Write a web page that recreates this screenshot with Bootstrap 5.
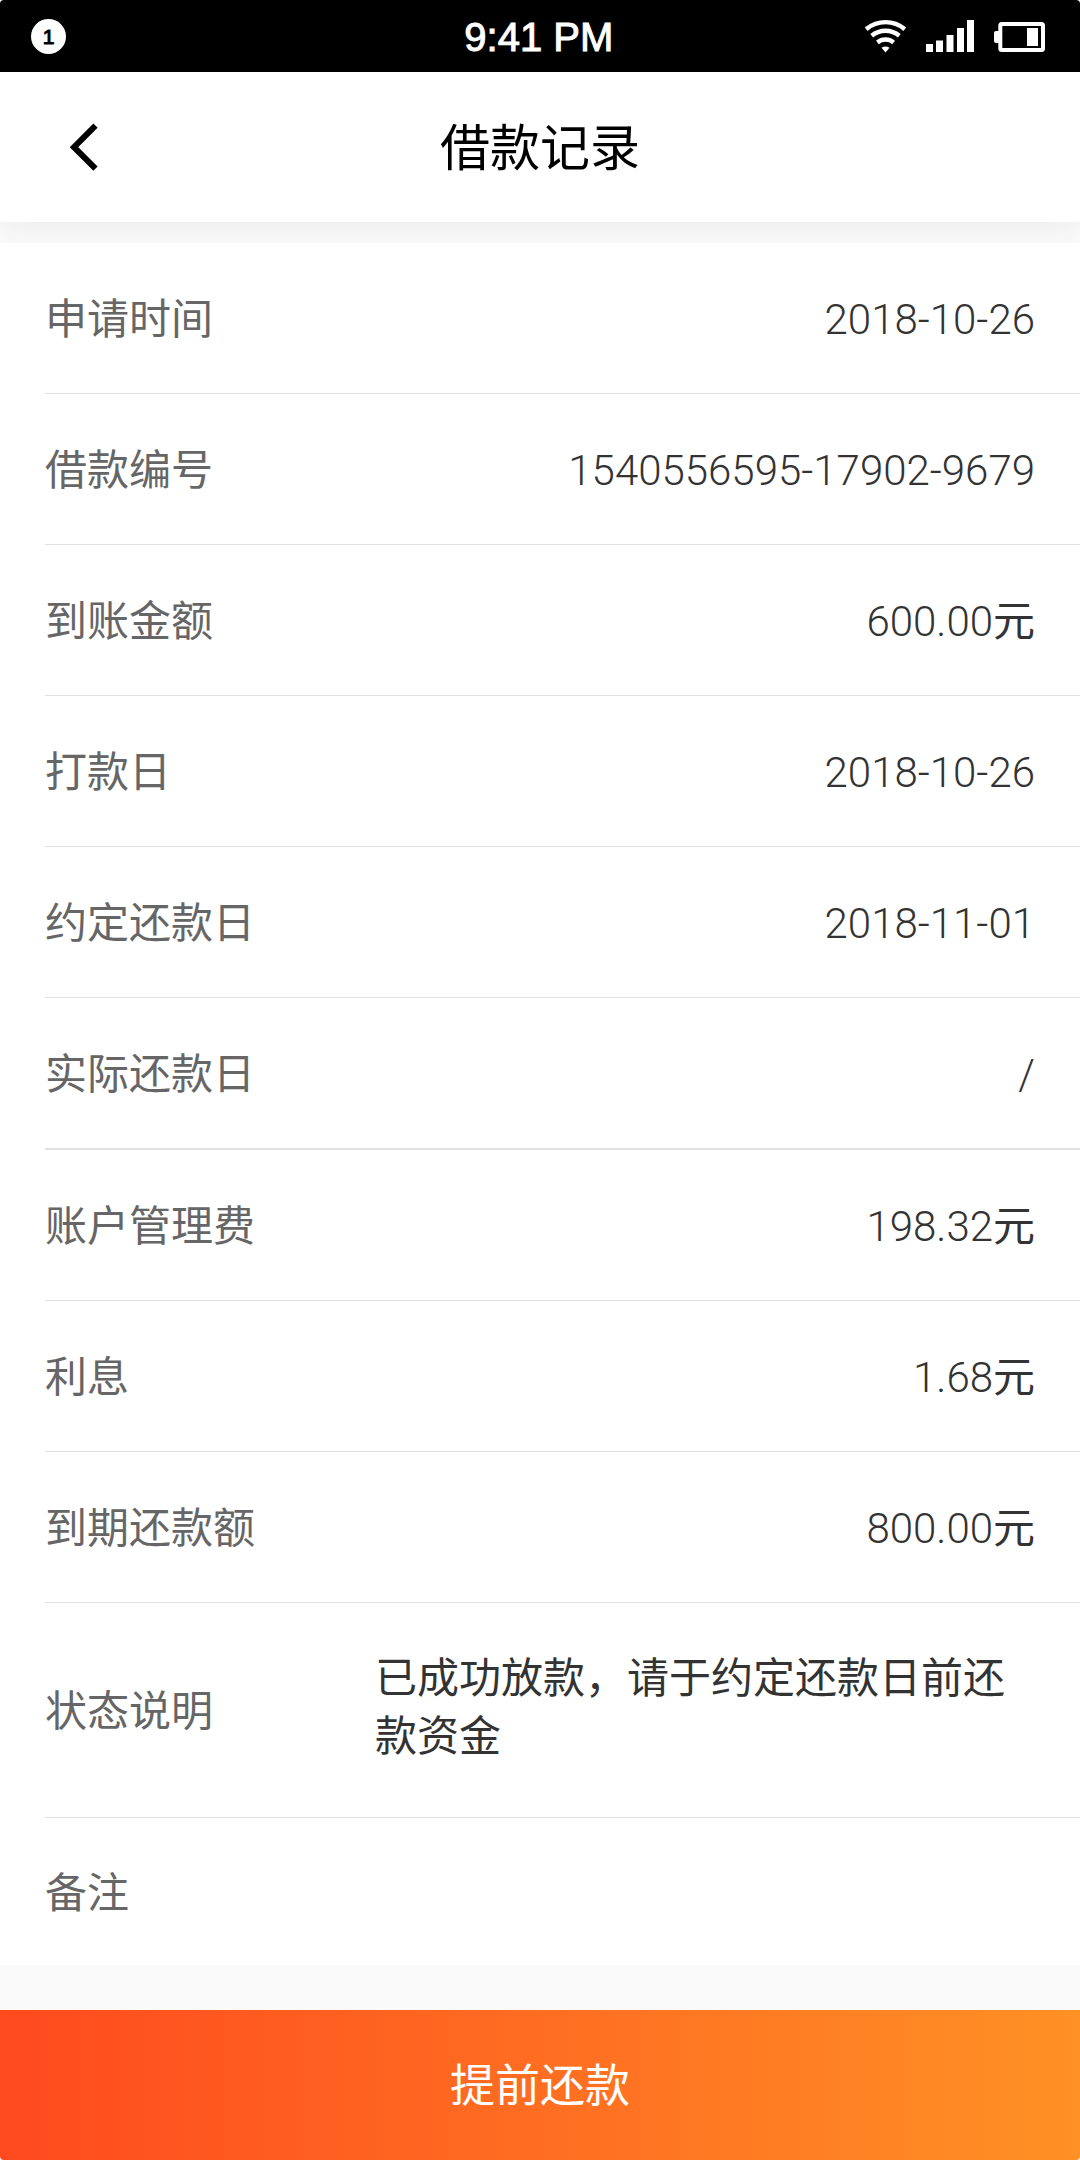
<!DOCTYPE html>
<html lang="zh-CN">
<head>
<meta charset="utf-8">
<meta name="viewport" content="width=device-width, initial-scale=1">
<title>借款记录</title>
<link href="https://cdn.jsdelivr.net/npm/bootstrap@5.3.0/dist/css/bootstrap.min.css" rel="stylesheet">
<style>
  body {
    font-family: "Liberation Sans", "Noto Sans CJK SC", sans-serif;
    background: #fff;
  }
  .screen { background: #fafafa; border-radius: 4px; overflow: hidden; }

  .status-bar { background: #000; height: 72px; }
  .status-left { padding-left: 31px; }
  .notice-count {
    width: 35px; height: 35px; line-height: 35px;
    font-size: 21px; color: #000; background: #fff;
    -webkit-text-stroke: 1px #000;
  }
  .clock { font-size: 40px; line-height: 48px; padding-top: 2px; -webkit-text-stroke: 1px #fff; }
  .status-icons { gap: 20px; padding-right: 35px; }

  .title-bar { height: 150px; padding: 0 45px; background: #fff; box-shadow: 0 8px 24px rgba(0, 0, 0, .05); }
  .back-btn { width: 60px; height: 60px; }
  .page-title { font-size: 50px; line-height: 60px; padding-top: 4px; color: #000; }

  .record-list { margin-top: 21px; padding-left: 45px; background: #fff; border-radius: 0; }
  .record-list .list-group-item {
    min-height: 151px; padding: 4px 45px 0 0;
    border-color: #e0e0e0; border-width: 0 0 1px;
    font-size: 42px; line-height: 58px; color: #333;
  }
  .record-list .group-end { min-height: 152px; border-bottom-width: 2px; }
  .record-list .status-row { min-height: 215px; }
  .record-list .note-row { min-height: 147px; border-bottom-width: 0; }
  .field-name { color: #666; }
  .field-value { font-family: Roboto, "Noto Sans CJK SC", sans-serif; font-weight: 300; }
  .field-value .unit { font-weight: 400; }
  .status-text { width: 660px; padding-bottom: 8px; }

  .repay-btn {
    height: 150px; font-size: 45px; color: #fff;
    background: linear-gradient(90deg, #ff4a1e, #ff9125);
  }
  .repay-btn span { display: block; padding-top: 4px; }
  .repay-btn:hover { color: #fff; }
</style>
</head>
<body>
<div class="screen d-flex flex-column min-vh-100">
  <div class="status-bar d-flex align-items-center text-white">
    <div class="status-left flex-fill w-100">
      <div class="notice-count rounded-circle text-center">1</div>
    </div>
    <div class="clock text-nowrap">9:41 PM</div>
    <div class="status-icons flex-fill w-100 d-flex justify-content-end">
      <svg width="41" height="34" viewBox="0 0 41 34" aria-hidden="true">
        <g fill="none" stroke="#fff" stroke-width="4.400">
          <path d="M1.200 10.200A30 30 0 0 1 39.800 10.200"/>
          <path d="M6.700 16.700A21.500 21.500 0 0 1 34.300 16.700"/>
          <path d="M12.400 23.500A12.600 12.600 0 0 1 28.600 23.500"/>
        </g>
        <path d="M20.500 33.500L16.500 28.800Q20.500 26 24.500 28.800Z" fill="#fff"/>
      </svg>
      <svg width="48" height="34" viewBox="0 0 48 34" fill="#fff" aria-hidden="true">
        <path d="M0 25h7v8H0zM10 21.500h7V33h-7zM20.500 16h7v17h-7zM31 9h7v24h-7zM41 1h7v32h-7z"/>
      </svg>
      <svg width="51" height="34" viewBox="0 0 51 34" fill="#fff" aria-hidden="true">
        <rect x="6.300" y="5" width="42.700" height="26" rx="1.500" fill="none" stroke="#fff" stroke-width="4"/>
        <path d="M5 12H2Q0 12 0 14v8Q0 24 2 24h3zM33 9h11v18H33z"/>
      </svg>
    </div>
  </div>

  <header class="title-bar d-flex align-items-center">
    <button type="button" class="back-btn btn p-0 border-0 d-flex align-items-center justify-content-center" aria-label="返回">
      <svg width="60" height="60" viewBox="0 0 60 60" fill="none" stroke="#000" stroke-width="6" aria-hidden="true">
        <path d="M50.500 8.700L29 30.200L50.500 51.700"/>
      </svg>
    </button>
    <h1 class="page-title flex-fill text-center fw-normal mb-0">借款记录</h1>
    <div class="back-btn"></div>
  </header>

  <main>
    <ul class="record-list list-group list-group-flush">
      <li class="list-group-item d-flex align-items-center justify-content-between"><span class="field-name">申请时间</span><span class="field-value">2018-10-26</span></li>
      <li class="list-group-item d-flex align-items-center justify-content-between"><span class="field-name">借款编号</span><span class="field-value">1540556595-17902-9679</span></li>
      <li class="list-group-item d-flex align-items-center justify-content-between"><span class="field-name">到账金额</span><span class="field-value">600.00<span class="unit">元</span></span></li>
      <li class="list-group-item d-flex align-items-center justify-content-between"><span class="field-name">打款日</span><span class="field-value">2018-10-26</span></li>
      <li class="list-group-item d-flex align-items-center justify-content-between"><span class="field-name">约定还款日</span><span class="field-value">2018-11-01</span></li>
      <li class="group-end list-group-item d-flex align-items-center justify-content-between"><span class="field-name">实际还款日</span><span class="field-value">/</span></li>
      <li class="list-group-item d-flex align-items-center justify-content-between"><span class="field-name">账户管理费</span><span class="field-value">198.32<span class="unit">元</span></span></li>
      <li class="list-group-item d-flex align-items-center justify-content-between"><span class="field-name">利息</span><span class="field-value">1.68<span class="unit">元</span></span></li>
      <li class="list-group-item d-flex align-items-center justify-content-between"><span class="field-name">到期还款额</span><span class="field-value">800.00<span class="unit">元</span></span></li>
      <li class="status-row list-group-item d-flex align-items-center justify-content-between"><span class="field-name">状态说明</span><span class="status-text">已成功放款，请于约定还款日前还款资金</span></li>
      <li class="note-row list-group-item d-flex align-items-center"><span class="field-name">备注</span></li>
    </ul>
  </main>

  <button type="button" class="repay-btn btn w-100 mt-auto p-0 border-0 rounded-0"><span>提前还款</span></button>
</div>
<script src="https://cdn.jsdelivr.net/npm/bootstrap@5.3.0/dist/js/bootstrap.bundle.min.js"></script>
</body>
</html>
